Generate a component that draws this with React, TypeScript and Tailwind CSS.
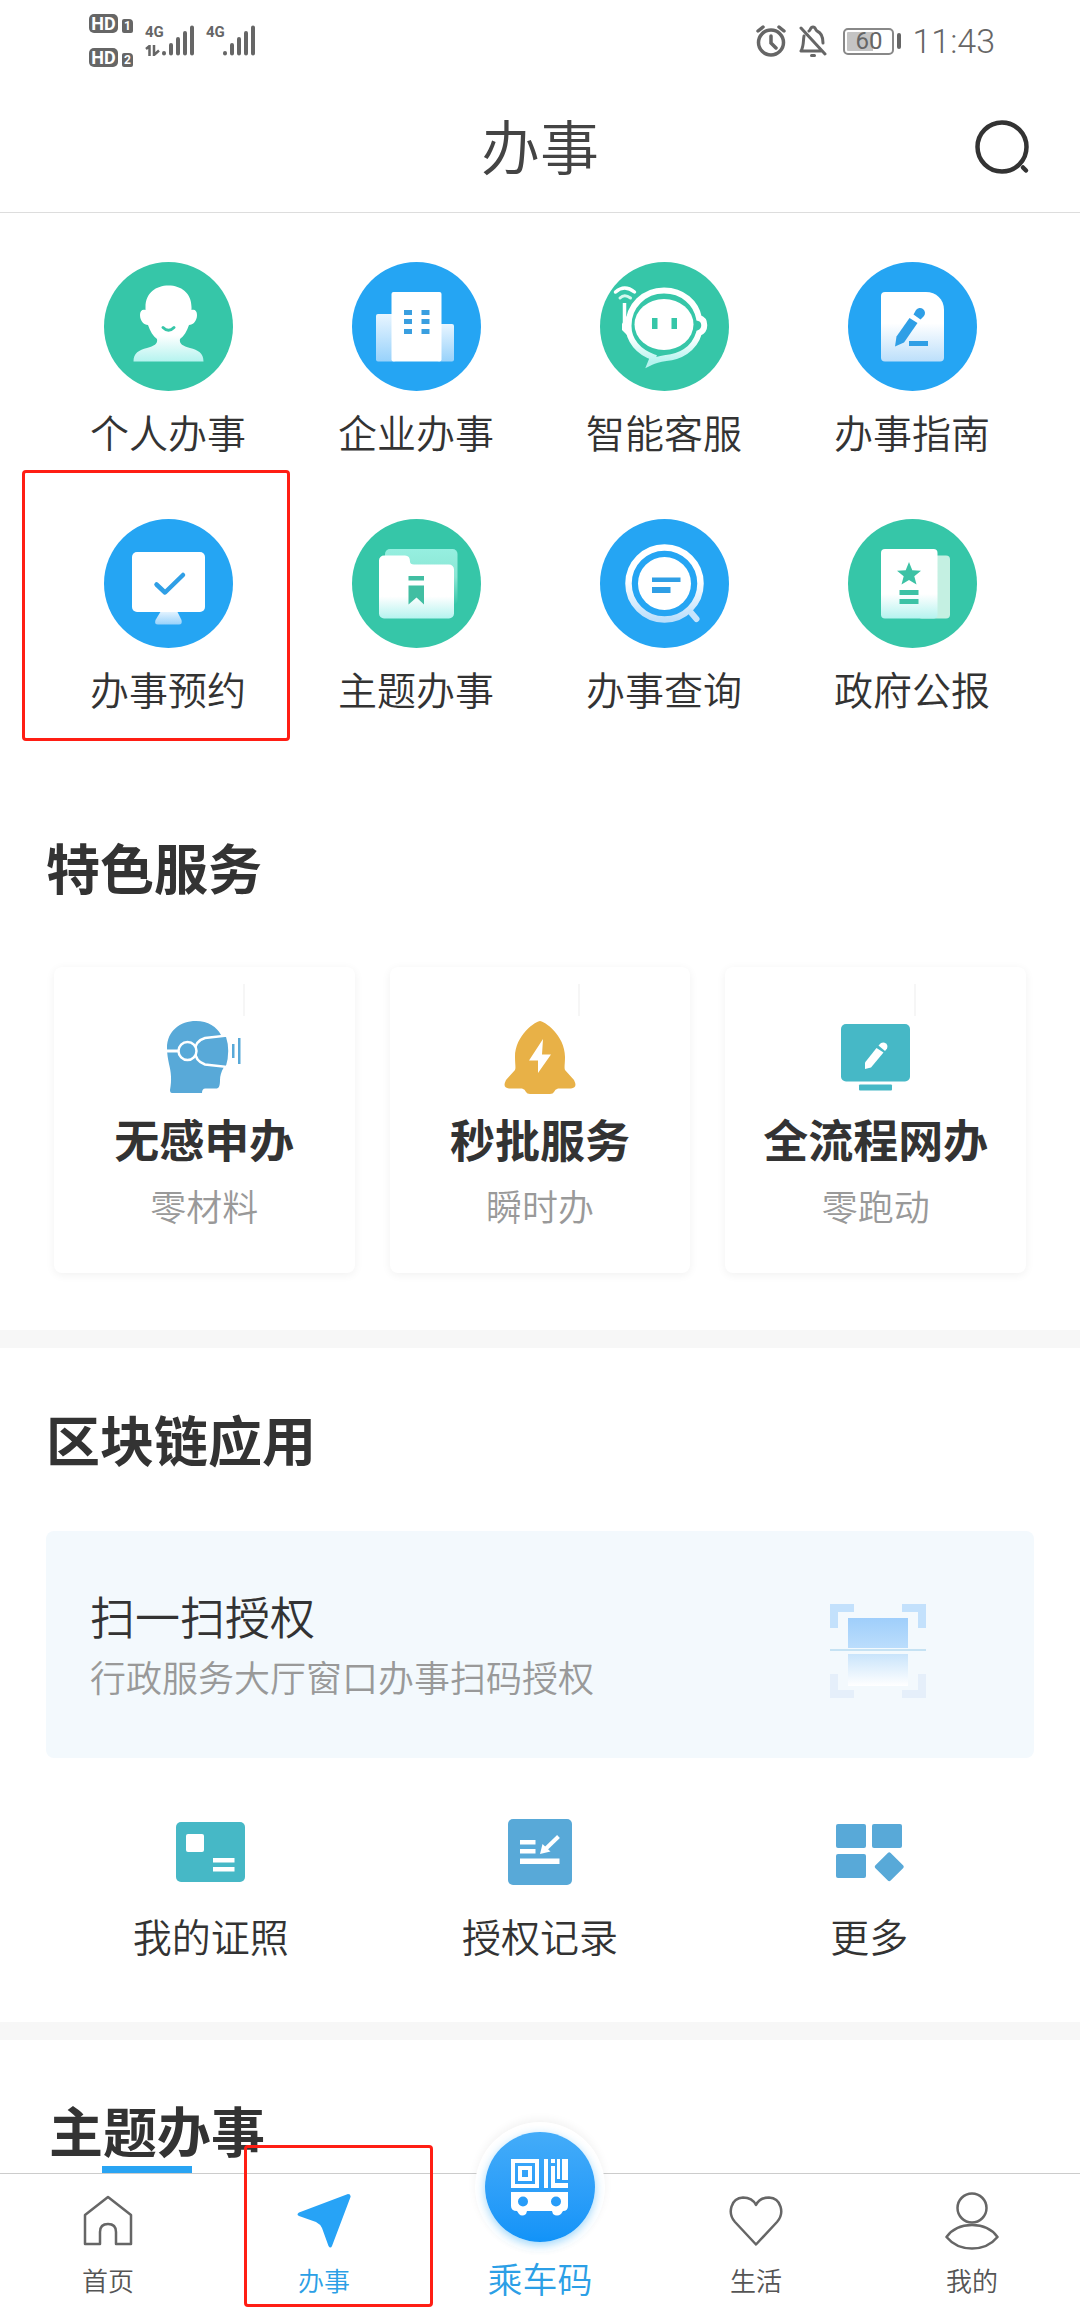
import type { ReactNode } from "react";

const GREEN = "#36c6a8";
const BLUE = "#25a5f3";

function Gradients() {
  return (
    <svg className="absolute size-0" aria-hidden="true">
      <defs>
        <linearGradient id="mint" x1="0" y1="0" x2="0" y2="1">
          <stop offset="0" stopColor="#fff" />
          <stop offset="0.65" stopColor="#fff" />
          <stop offset="1" stopColor="#b5f3ef" />
        </linearGradient>
        <linearGradient id="mintSoft" x1="0" y1="0" x2="0" y2="1">
          <stop offset="0" stopColor="#96efe0" />
          <stop offset="0.5" stopColor="#8be6d4" />
          <stop offset="1" stopColor="#36c6a8" />
        </linearGradient>
        <linearGradient id="sky" x1="0" y1="0" x2="0" y2="1">
          <stop offset="0" stopColor="#fff" />
          <stop offset="0.45" stopColor="#fff" />
          <stop offset="1" stopColor="#bcdffb" />
        </linearGradient>
        <linearGradient id="skySoft" x1="0" y1="0" x2="0" y2="1">
          <stop offset="0" stopColor="#e8f5ff" />
          <stop offset="1" stopColor="#98d2fb" />
        </linearGradient>
        <linearGradient id="scanTop" x1="0" y1="0" x2="0" y2="1">
          <stop offset="0" stopColor="#9fcefb" />
          <stop offset="1" stopColor="#bbddfc" />
        </linearGradient>
        <linearGradient id="scanBottom" x1="0" y1="0" x2="0" y2="1">
          <stop offset="0" stopColor="#c9e4fb" />
          <stop offset="1" stopColor="#fff" />
        </linearGradient>
      </defs>
    </svg>
  );
}

function Disc({ color, children }: { color: string; children: ReactNode }) {
  return (
    <svg viewBox="0 0 129 129" className="size-[129px]" aria-hidden="true">
      <circle cx="64.5" cy="64.5" r="64.5" fill={color} />
      {children}
    </svg>
  );
}

const services: { label: string; marked?: boolean; icon: ReactNode }[] = [
  {
    label: "个人办事",
    icon: (
      <Disc color={GREEN}>
        <path
          fill="url(#mint)"
          d="M41.500 48V45C41.500 31 52 23.500 64.500 23.500S87.500 31 87.500 45V48C91 47 93 49 93 53C93 59 89 63 85 63C83 69 80 74 76 77C75 82 79 84 86 86C94 88 99.500 91 99.500 99.500H29.500C29.500 91 35 88 43 86C50 84 54 82 53 77C49 74 46 69 44 63C40 63 36 59 36 53C36 49 38 47 41.500 48Z"
        />
        <path d="M59 65.500Q64.500 71 70 65.500" fill="none" stroke={GREEN} strokeWidth="3" strokeLinecap="round" />
      </Disc>
    ),
  },
  {
    label: "企业办事",
    icon: (
      <Disc color={BLUE}>
        <rect x="24" y="52" width="20" height="47.500" rx="2" fill="url(#skySoft)" />
        <rect x="85" y="62" width="17" height="37.500" rx="2" fill="url(#skySoft)" />
        <rect x="39.500" y="30" width="50" height="69.500" rx="2" fill="#fff" />
        <path d="M52 48h8v5h-8zM69.500 48h8v5h-8zM52 57h8v5h-8zM69.500 57h8v5h-8zM52 67h8v5h-8zM69.500 67h8v5h-8z" fill="#3a9fe0" />
      </Disc>
    ),
  },
  {
    label: "智能客服",
    icon: (
      <Disc color={GREEN}>
        <path
          d="M53 95C39 90 28.500 79 28.500 64C28 44 44 28.500 64 28.500C83 28.500 96 41 99 56C106 58 106 68 99 71C94 88 79 95 66 96C60 97 55 98 51 100Z"
          fill="none"
          stroke="url(#mint)"
          strokeWidth="6"
        />
        <path d="M24.500 41V62" stroke="#fff" strokeWidth="3.500" />
        <path d="M22 62l6-10 4 26-10-10z" fill="#fff" />
        <path d="M15.500 30Q24.500 22 34.500 30" fill="none" stroke="#fff" strokeWidth="3.500" strokeLinecap="round" />
        <path d="M20 36Q24.500 31.500 30.500 36" fill="none" stroke="#d5f8ee" strokeWidth="3" strokeLinecap="round" />
        <ellipse cx="64" cy="62.500" rx="29.500" ry="25.500" fill="#fff" />
        <path d="M52 56h5.500v11H52zM71.500 56H77v11h-5.500z" fill={GREEN} />
      </Disc>
    ),
  },
  {
    label: "办事指南",
    icon: (
      <Disc color={BLUE}>
        <path d="M37 30H78C88 30 96 37 96 48V95.500a4 4 0 0 1-4 4H37a4 4 0 0 1-4-4V34a4 4 0 0 1 4-4Z" fill="url(#sky)" />
        <path d="M47 84.500L48.500 74.500L61.500 56L69.500 61L56 80.500Z" fill="#2f9fe6" />
        <path d="M65.500 52.500L68 48a5 5 0 0 1 8 6l-3.500 3.500z" fill="#2f9fe6" />
        <path d="M61 79h19v5H61z" fill="#2f9fe6" />
      </Disc>
    ),
  },
  {
    label: "办事预约",
    marked: true,
    icon: (
      <Disc color={BLUE}>
        <path d="M57 92h16l4.500 9q1 4.500-2.500 4.500H54q-4 0-2.500-4.500z" fill="url(#skySoft)" />
        <rect x="28" y="33" width="73" height="60" rx="5" fill="#fff" />
        <path d="M52.500 65.500L61 73.500L79 56" fill="none" stroke="#2f9fe6" strokeWidth="4.500" strokeLinecap="round" strokeLinejoin="round" />
      </Disc>
    ),
  },
  {
    label: "主题办事",
    icon: (
      <Disc color={GREEN}>
        <rect x="33" y="30" width="72.500" height="56" rx="5" fill="url(#mintSoft)" />
        <path d="M32 36.500H53q5 0 5 6q0 3 4 3H97a5 5 0 0 1 5 5V94.500a5 5 0 0 1-5 5H32a5 5 0 0 1-5-5V41.500a5 5 0 0 1 5-5Z" fill="url(#mint)" />
        <path d="M56.500 57H72v4.500H56.500zM56.500 66.500H72V85.500L64.500 78.500L56.500 85.500z" fill="#41bea2" />
      </Disc>
    ),
  },
  {
    label: "办事查询",
    icon: (
      <Disc color={BLUE}>
        <circle cx="64.500" cy="64.500" r="36" fill="none" stroke="url(#sky)" strokeWidth="6.500" />
        <path d="M91 93.500L96.500 100" stroke="#c6e4fc" strokeWidth="6" strokeLinecap="round" />
        <circle cx="64.500" cy="64.500" r="26.500" fill="#fff" />
        <path d="M52 58.500h28.500V63H52zM52 68h18.500v6H52z" fill="#2f9fe6" />
      </Disc>
    ),
  },
  {
    label: "政府公报",
    icon: (
      <Disc color={GREEN}>
        <rect x="70" y="36.500" width="32" height="63" rx="4" fill="#c4f0e2" />
        <rect x="33" y="30" width="56.500" height="69.500" rx="4" fill="url(#mint)" />
        <path d="M61 43l3.300 8.200 8.700.5-6.700 5.500 2.200 8.300-7.500-4.600-7.500 4.600 2.200-8.300-6.700-5.500 8.700-.5z" fill="#3cc2a5" />
        <path d="M51.500 71h19v5h-19zM51.500 80h19v5h-19z" fill="#3cc2a5" />
      </Disc>
    ),
  },
];

const features = [
  {
    title: "无感申办",
    note: "零材料",
    icon: (
      <svg viewBox="0 0 75 75" className="size-[75px]" aria-hidden="true">
        <path
          d="M0 28C0 11 13 1 29 1C41 1 50 7 54 15L57 47C54 52 53 56 53 60C53 66 52 68.500 49 68.500H39Q35 68 35 73H5Q3 73 3 70C5 60 4 52 2 44C1 39 0 34 0 28Z"
          fill="#58a9d8"
        />
        <path d="M0 31H12" stroke="#fff" strokeWidth="3" />
        <path d="M38 18L60 15.500Q65 31 60 47L38 44.500Q28 41 28 31T38 18Z" fill="#58a9d8" stroke="#fff" strokeWidth="2.500" />
        <circle cx="20.500" cy="31" r="9" fill="#58a9d8" stroke="#fff" strokeWidth="2.500" />
        <path d="M65 24h2.500v14H65zM71 18h2.500v26H71z" fill="#58a9d8" />
      </svg>
    ),
  },
  {
    title: "秒批服务",
    note: "瞬时办",
    icon: (
      <svg viewBox="0 0 72 73" className="h-[73px] w-[72px]" aria-hidden="true">
        <path
          d="M36 0C40 0 61 14 61 36C61 43 60 47 61 49L70 59Q74 67 67 67.500H54Q51 68 50 71Q49 73 46 73H26Q23 73 22 71Q21 68 18 67.500H5Q-2 67 2 59L11 49C12 47 11 43 11 36C11 14 32 0 36 0Z"
          fill="#e8b147"
        />
        <path d="M39 18L25 39.500H34V52L47 33.500H38Z" fill="#fff" />
      </svg>
    ),
  },
  {
    title: "全流程网办",
    note: "零跑动",
    icon: (
      <svg viewBox="0 0 69 67" className="h-[67px] w-[69px]" aria-hidden="true">
        <rect width="69" height="57.500" rx="5" fill="#46b8c6" />
        <rect x="18" y="60.500" width="33" height="6" rx="1" fill="#46b8c6" />
        <path d="M24 45V38.500L35.500 24L42.500 28.500L30 43.500Z" fill="#fff" />
        <path d="M37.500 21.500L40 19a4.300 4.300 0 0 1 6 5.500l-2 2.500z" fill="#fff" />
      </svg>
    ),
  },
];

const records = [
  {
    label: "我的证照",
    icon: (
      <svg viewBox="0 0 69 60" className="h-[60px] w-[69px]" aria-hidden="true">
        <rect width="69" height="60" rx="5" fill="#46b8c6" />
        <rect x="10" y="12" width="18" height="18" rx="2" fill="#fff" />
        <path d="M37 36h21.500v4.500H37zM37 45h21.500v4.500H37z" fill="#fff" />
      </svg>
    ),
  },
  {
    label: "授权记录",
    icon: (
      <svg viewBox="0 0 64 66" className="h-[66px] w-[64px]" aria-hidden="true">
        <rect width="64" height="66" rx="5" fill="#58a9d8" />
        <path d="M12 21h15.500v4.500H12zM12 30h15.500v4.500H12zM12 39.500h39.500V45H12z" fill="#fff" />
        <path d="M50.500 17.500L37 30.500" stroke="#fff" strokeWidth="4" />
        <path d="M32 35L34.500 25L42.500 32.500Z" fill="#fff" />
      </svg>
    ),
  },
  {
    label: "更多",
    icon: (
      <svg viewBox="-2 -2 70 60" className="h-[60px] w-[70px]" aria-hidden="true">
        <g fill="#58a9d8">
          <rect width="30" height="24" rx="2" />
          <rect x="36" width="30" height="24" rx="2" />
          <rect y="30" width="30" height="24" rx="2" />
          <rect x="42.500" y="32" width="21.500" height="21.500" rx="2" transform="rotate(45 53.250 42.750)" />
        </g>
      </svg>
    ),
  },
];

function SectionTitle({ children }: { children: ReactNode }) {
  return <h2 className="text-[54px] leading-[60px] font-bold text-[#333]">{children}</h2>;
}

function Mark({ className }: { className: string }) {
  return <span aria-hidden="true" className={`pointer-events-none absolute rounded-[4px] border-3 border-[#ff1e14] ${className}`} />;
}

function HdBadge({ slot }: { slot: string }) {
  return (
    <span className="flex items-end gap-1">
      <span className="flex h-[19px] w-[29px] items-center justify-center rounded-[5px] bg-[#666] text-[18px] leading-none font-bold text-white">HD</span>
      <span className="flex h-[14px] w-[11px] items-center justify-center rounded-[2px] rounded-tr-[4px] bg-[#666] text-[12px] leading-none font-bold text-white">{slot}</span>
    </span>
  );
}

function Signal({ data }: { data?: boolean }) {
  return (
    <span className="flex h-[31px] w-[50px]">
      <span className="flex w-[17px] flex-col justify-between">
        <span className="text-[15px] leading-[15px] font-bold text-[#666]">4G</span>
        {data && (
          <svg viewBox="0 0 15 11" className="h-[11px] w-[15px]" fill="none" stroke="#666" strokeWidth="2.500" aria-hidden="true">
            <path d="M1 4L4.500 1V11M9 0V10L14 5.500" />
          </svg>
        )}
      </span>
      <svg viewBox="0 0 33 31" className="h-[31px] w-[33px]" stroke="#666" strokeWidth="4" strokeLinecap="round" aria-hidden="true">
        <path d="M2 28.500V28M9 28.500V20M16 28.500V14M23 28.500V8M30 28.500V2.500" />
      </svg>
    </span>
  );
}

function StatusBar() {
  return (
    <div className="flex h-[84px] items-start justify-between pr-[85px] pl-[89px] text-[#666]">
      <div className="flex pt-[14px]">
        <div className="flex flex-col gap-[15px]">
          <HdBadge slot="1" />
          <HdBadge slot="2" />
        </div>
        <div className="flex gap-[11px] pt-[11px] pl-[12px]">
          <Signal data />
          <Signal />
        </div>
      </div>
      <div className="flex h-[82px] items-center">
        <svg viewBox="0 0 30 32" className="mr-[13px] h-8 w-[30px]" fill="none" stroke="#666" strokeWidth="3.500" strokeLinecap="round" aria-hidden="true">
          <circle cx="15" cy="17.500" r="12.500" />
          <path d="M15 11v7l5 5M2 6l5-4M28 6l-5-4" />
        </svg>
        <svg viewBox="0 0 28 32" className="mr-4 h-8 w-7" fill="none" stroke="#666" strokeWidth="3" strokeLinecap="round" strokeLinejoin="round" aria-hidden="true">
          <path d="M2 3L26 29M5 11C4 16 5 21 2 26H23M10 6C12 5 11 2 14 2S16 5 18 6C23 8 24 12 24 18M12.500 30.500h3" />
        </svg>
        <span className="flex h-[27px] w-[51px] items-center rounded-[5px] border-2 border-[#888] bg-[linear-gradient(90deg,#c4c4c4_60%,#fff_60%)] bg-clip-content p-[2px] text-[24px] leading-none">
          <span className="w-full text-center">60</span>
        </span>
        <span className="mr-[11px] ml-[3px] h-4 w-1 rounded-sm bg-[#666]" />
        <span className="text-[34px] leading-10 font-[350]">11:43</span>
      </div>
    </div>
  );
}

const tabClass = "relative flex flex-1 flex-col items-center pt-[18px] pb-[10px]";
const tabIconClass = "flex h-[57px] items-center justify-center";
const tabLabelClass = "mt-[13px] text-[26px] leading-10 font-[350]";

function TabBar() {
  return (
    <nav className="sticky bottom-0 flex border-t border-[#ccc] bg-white text-[#555]">
      <a href="#home" className={tabClass}>
        <span className={tabIconClass}>
          <svg viewBox="0 0 50 51" className="h-[51px] w-[50px]" fill="none" stroke="#666" strokeWidth="2.500" strokeLinejoin="round" aria-hidden="true">
            <path d="M2 20L25 2L48 20V49H33V37Q33 29 25 29T17 37V49H2Z" />
          </svg>
        </span>
        <span className={tabLabelClass}>首页</span>
      </a>
      <a href="#services" aria-current="page" className={`${tabClass} text-[#2c9fe6]`}>
        <span className={tabIconClass}>
          <svg viewBox="0 0 54 54" className="size-[54px]" fill="#27a3f6" aria-hidden="true">
            <path d="M51 0Q54 0 53.500 3L35 52Q33.500 55 31.500 52L25 34Q23 30 19 28L2 22Q-1 20.500 2 18.500Z" />
          </svg>
        </span>
        <span className={tabLabelClass}>办事</span>
        <Mark className="top-[-29px] right-[-1px] bottom-[5px] left-[28px]" />
      </a>
      <a href="#ride" className={`${tabClass} text-[#2c9fe6]`}>
        <span className="absolute top-[-52px] left-1/2 flex size-[130px] -translate-x-1/2 items-center justify-center rounded-full bg-white shadow-[0_-3px_8px_rgba(0,0,0,0.05)]">
          <span className="flex size-[110px] items-center justify-center rounded-full bg-linear-to-b from-[#43acf9] to-[#1193f8] shadow-[0_3px_10px_rgba(37,165,243,0.45)]">
            <svg viewBox="0 0 58 57" className="h-[57px] w-[58px]" fill="#fff" aria-hidden="true">
              <path fillRule="evenodd" d="M0 0H28V29H0ZM4 4V25H24V4ZM7 7H21V22H7ZM11 11V18H17V11Z" />
              <path d="M33 0h4v29h-4zM40 0h4v4h-4zM40 7h4v13h-4zM51 0h6v21h-6zM40 24h17v5H40zM46 0h3v20h-3zM40 20h4v9h-4z" />
              <path fillRule="evenodd" d="M0 33H57V47Q57 52 52 52L50 55Q46 58 42 55L41 52H16L15 55Q11 58 8 55L6 52Q0 52 0 47ZM12 37.500a5 5 0 1 0 0 10a5 5 0 1 0 0-10ZM45 37.500a5 5 0 1 0 0 10a5 5 0 1 0 0-10Z" />
            </svg>
          </span>
        </span>
        <span className={tabIconClass} />
        <span className="mt-[13px] text-[35px] leading-10 font-[350]">乘车码</span>
      </a>
      <a href="#life" className={tabClass}>
        <span className={tabIconClass}>
          <svg viewBox="0 0 54 50" className="h-[50px] w-[54px]" fill="none" stroke="#666" strokeWidth="2.500" strokeLinejoin="round" aria-hidden="true">
            <path d="M27 48.500L6 26C-2 17 2 2 14 1.500C21 1.500 25 5 27 9C29 5 33 1.500 40 1.500C52 2 56 17 48 26Z" />
          </svg>
        </span>
        <span className={tabLabelClass}>生活</span>
      </a>
      <a href="#me" className={tabClass}>
        <span className={tabIconClass}>
          <svg viewBox="0 0 54 58" className="h-[58px] w-[54px]" fill="none" stroke="#666" strokeWidth="2.500" strokeLinejoin="round" aria-hidden="true">
            <circle cx="27" cy="16" r="14.500" />
            <path d="M1.500 45Q10 33 27 33T52.500 45Q43 56.500 27 56.500T1.500 45Z" />
          </svg>
        </span>
        <span className={tabLabelClass}>我的</span>
      </a>
    </nav>
  );
}

export default function App() {
  return (
    <div className="min-h-screen bg-white font-['Roboto','Noto_Sans_CJK_SC',sans-serif] text-[#333]">
      <Gradients />
      <StatusBar />
      <header className="grid h-[129px] grid-cols-[1fr_auto_1fr] items-center border-b border-[#ddd] px-[50px]">
        <h1 className="col-start-2 pt-1 text-[59px] leading-[80px] font-[350] text-[#444]">办事</h1>
        <button type="button" aria-label="搜索" className="justify-self-end">
          <svg viewBox="0 0 56 56" className="size-14" fill="none" stroke="#333" strokeWidth="4.500" strokeLinecap="round" aria-hidden="true">
            <circle cx="28" cy="27" r="24.500" />
            <path d="M49 47.500L52 50.500" />
          </svg>
        </button>
      </header>

      <main>
        <section className="grid grid-cols-4 gap-y-[54px] px-11 pt-[49px]">
          {services.map((s) => (
            <button key={s.label} type="button" className="relative flex flex-col items-center">
              {s.icon}
              <span className="mt-[14px] text-[39px] leading-[60px] font-[350]">{s.label}</span>
              {s.marked && <Mark className="top-[-49px] right-[2px] bottom-[-19px] left-[-22px]" />}
            </button>
          ))}
        </section>

        <section className="px-[46px] pt-[120px] pb-[57px]">
          <SectionTitle>特色服务</SectionTitle>
          <div className="mt-[65px] grid grid-cols-3 gap-[35px] px-2">
            {features.map((f) => (
              <button
                key={f.title}
                type="button"
                className="relative flex flex-col items-center rounded-lg bg-white pt-[53px] pb-[44px] shadow-[0_2px_10px_rgba(0,0,0,0.06)]"
              >
                <span aria-hidden="true" className="absolute top-[17px] right-[110px] h-8 w-[2px] bg-[#f6f6f6]" />
                <span className="flex h-[75px] items-center">{f.icon}</span>
                <span className="mt-[18px] text-[45px] leading-[60px] font-bold">{f.title}</span>
                <span className="mt-4 text-[36px] leading-10 font-[350] text-[#999]">{f.note}</span>
              </button>
            ))}
          </div>
        </section>

        <section className="border-t-18 border-[#f7f7f7] px-[46px] pt-[66px] pb-[53px]">
          <SectionTitle>区块链应用</SectionTitle>
          <button
            type="button"
            className="mt-[57px] flex w-full items-start justify-between rounded-lg bg-[#f3f9fd] pt-[59px] pr-[108px] pb-[58px] pl-[44px] text-left"
          >
            <span className="flex flex-col">
              <span className="text-[45px] leading-[60px] font-[350]">扫一扫授权</span>
              <span className="mt-[10px] text-[36px] leading-10 font-[350] text-[#999]">行政服务大厅窗口办事扫码授权</span>
            </span>
            <svg viewBox="0 0 96 94" className="mt-[14px] h-[94px] w-[96px]" aria-hidden="true">
              <path d="M0 0H24V8H8V24H0ZM72 0H96V24H88V8H72Z" fill="#c3e1fc" />
              <path d="M0 70H8V86H24V94H0ZM88 70H96V94H72V86H88Z" fill="#e5effa" />
              <rect x="18" y="14" width="60" height="30" fill="url(#scanTop)" />
              <rect y="45" width="96" height="2" fill="#c5e2f3" />
              <rect x="18" y="50" width="60" height="32" fill="url(#scanBottom)" />
            </svg>
          </button>
          <div className="mt-[61px] grid grid-cols-3">
            {records.map((r) => (
              <button key={r.label} type="button" className="flex flex-col items-center">
                <span className="flex h-[66px] items-center">{r.icon}</span>
                <span className="mt-6 text-[39px] leading-[60px] font-[350]">{r.label}</span>
              </button>
            ))}
          </div>
        </section>

        <section className="border-t-18 border-[#f7f7f7] px-[49px] pt-[65px]">
          <SectionTitle>主题办事</SectionTitle>
          <div className="mt-px ml-[53px] h-[7px] w-[90px] bg-[#29a4f3]" />
        </section>
      </main>

      <TabBar />
    </div>
  );
}
